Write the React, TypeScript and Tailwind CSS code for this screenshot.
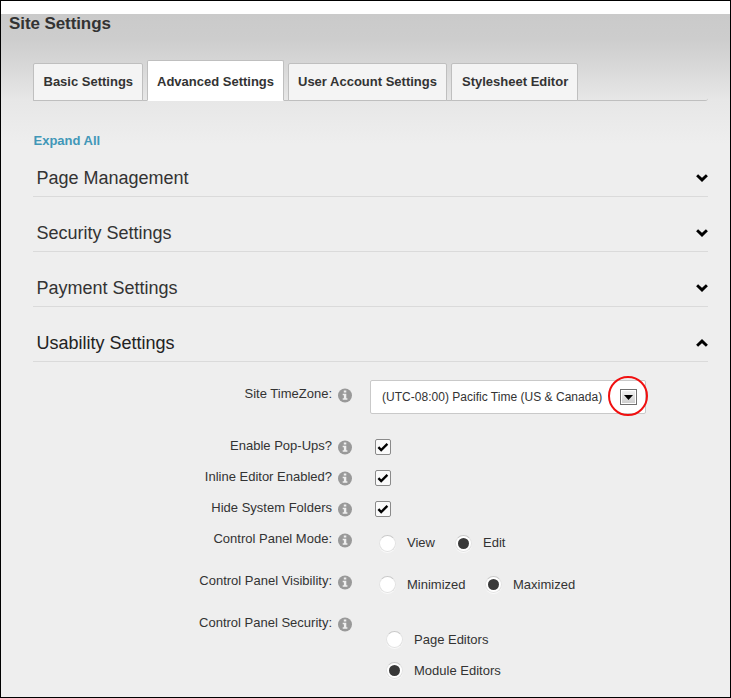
import type { ReactNode } from "react";

function Tab({ label, className }: { label: string; className: string }) {
  return (
    <div className={`box-border flex shrink-0 items-center whitespace-nowrap rounded-t-[2px] border border-[#bfbfbf] text-[13px] font-bold ${className}`}>
      {label}
    </div>
  );
}

function Chevron({ up = false }: { up?: boolean }) {
  return (
    <svg width="12" height="8" viewBox="0 0 12 8" className={up ? "rotate-180" : ""}>
      <path d="M1.1 1.3 6 5.9 10.9 1.3" fill="none" stroke="#000" strokeWidth="2.9" />
    </svg>
  );
}

function Section({ title, textClass, open = false }: { title: string; textClass: string; open?: boolean }) {
  return (
    <div className="flex h-[55px] items-end justify-between border-b border-[#dadada]">
      <h2 className={`mb-[6px] ml-[3.5px] whitespace-nowrap text-[18px] leading-[24px] ${textClass}`}>{title}</h2>
      <div className="mb-[14px]">
        <Chevron up={open} />
      </div>
    </div>
  );
}

function InfoIcon() {
  return (
    <svg width="15" height="15" viewBox="0 0 15 15" className="mt-[8px] ml-[6px] -mr-px shrink-0">
      <circle cx="7" cy="7.5" r="7" fill="#999" />
      <path d="M5.8 2.6h2.5v2H5.8zM4.7 5.8h3.6v4.5h1.1v1.5H4.7v-1.5h1.2V7.3H4.7z" fill="#efefef" />
    </svg>
  );
}

function Row({ label, height, children }: { label: string; height: string; children: ReactNode }) {
  return (
    <div className={`flex items-start ${height}`}>
      <div className="w-[299px] shrink-0 text-right leading-[28px] whitespace-nowrap">{label}</div>
      <InfoIcon />
      {children}
    </div>
  );
}

function Checkbox() {
  return (
    <div className="mt-[7px] ml-[23px] flex h-4 w-4 items-center justify-center rounded-[2px] border border-[#8a8a8a] bg-[#fafafa]">
      <svg width="12" height="10" viewBox="0 0 12 10">
        <path d="M1.4 5.1 4.2 8 10.4 1.9" fill="none" stroke="#000" strokeWidth="2.4" />
      </svg>
    </div>
  );
}

function Radio({ label, checked = false, textClass = "" }: { label: string; checked?: boolean; textClass?: string }) {
  return (
    <div className="flex h-[17px] items-center whitespace-nowrap">
      <span className="flex h-[17px] w-[17px] shrink-0 items-center justify-center rounded-full border border-[#e2e2e2] border-t-[#c9c9c9] bg-white shadow-[0_1px_0_#fafafa]">
        {checked && <span className="h-[11px] w-[11px] rounded-full bg-[#393939]" />}
      </span>
      <span className={`ml-[11px] leading-[17px] ${textClass}`}>{label}</span>
    </div>
  );
}

export default function App() {
  return (
    <div className="h-[698px] w-[731px] overflow-hidden border border-black bg-white pt-[13px] font-['Liberation_Sans',Arial,sans-serif] text-[13px] text-[#333]">
      <div className="h-[683px] bg-[#eee] bg-[linear-gradient(to_bottom,#cacaca_0px,#cdcdcd_25px,#d6d6d6_48px,#e7e7e7_86px,#eee_130px)]">
        <h1 className="ml-[8px] h-[46px] text-[17px] leading-[20px] font-bold tracking-[-0.09px]">Site Settings</h1>
        <div className="ml-[32px] w-[675px]">
          <div className="flex h-[41px] items-end gap-1 rounded-br-[3px] border-b border-[#bfbfbf]">
            <Tab label="Basic Settings" className="-mb-px h-[38px] w-[110px] bg-[#f4f4f4] pl-[9.5px]" />
            <Tab label="Advanced Settings" className="-mb-px h-[41px] w-[137px] border-b-white bg-white pt-[2px] pl-[9px]" />
            <Tab label="User Account Settings" className="-mb-px h-[38px] w-[159px] bg-[#f4f4f4] pl-[9px]" />
            <Tab label="Stylesheet Editor" className="-mb-px h-[38px] w-[127px] bg-[#f4f4f4] pl-[10px]" />
          </div>
          <div className="flex h-[41px] items-end">
            <a className="-mb-[3px] ml-[0.5px] h-[9px] leading-[9px] font-bold text-[#4197b8]">Expand All</a>
          </div>
          <div>
            <Section title="Page Management" textClass="" />
            <Section title="Security Settings" textClass="" />
            <Section title="Payment Settings" textClass="" />
            <Section title="Usability Settings" textClass="text-[#222]" open />
          </div>
        </div>
        <div className="ml-[32px] pt-[18px]">
          <Row label="Site TimeZone:" height="h-[52px]">
            <div className="relative ml-[18px] flex h-[34px] w-[276px] items-center rounded-[2px] border border-[#c9c9c9] bg-white pl-[11px]">
              <span className="w-[227px] shrink-0 text-[12px] tracking-[0.02px] whitespace-nowrap">(UTC-08:00) Pacific Time (US &amp; Canada)</span>
              <span className="ml-[11px] flex h-4 w-[17px] items-center justify-center border border-[#707070] bg-white p-px">
                <span className="flex h-full w-full items-center justify-center bg-linear-to-b from-[#f1f1f1] to-[#cfcfcf]">
                  <svg width="9" height="5" viewBox="0 0 9 5">
                    <path d="M0 0h9L4.5 5z" fill="#000" />
                  </svg>
                </span>
              </span>
              <span className="absolute top-[-5px] left-[237px] h-10 w-10 rounded-full border-2 border-[#f01010]" />
            </div>
          </Row>
          <Row label="Enable Pop-Ups?" height="h-[31px]"><Checkbox /></Row>
          <Row label="Inline Editor Enabled?" height="h-[31px]"><Checkbox /></Row>
          <Row label="Hide System Folders" height="h-[31px]"><Checkbox /></Row>
          <Row label="Control Panel Mode:" height="h-[42px]">
            <div className="mt-[10px] ml-[27px] flex">
              <div className="w-[76px]"><Radio label="View" textClass="-mt-[2px]" /></div>
              <Radio label="Edit" checked textClass="-mt-[2px]" />
            </div>
          </Row>
          <Row label="Control Panel Visibility:" height="h-[42px]">
            <div className="mt-[9px] ml-[27px] flex">
              <div className="w-[106px]"><Radio label="Minimized" /></div>
              <Radio label="Maximized" checked />
            </div>
          </Row>
          <Row label="Control Panel Security:" height="h-[88px]">
            <div className="mt-[22px] ml-[34px] flex flex-col gap-[14px]">
              <Radio label="Page Editors" />
              <Radio label="Module Editors" checked />
            </div>
          </Row>
        </div>
      </div>
    </div>
  );
}
